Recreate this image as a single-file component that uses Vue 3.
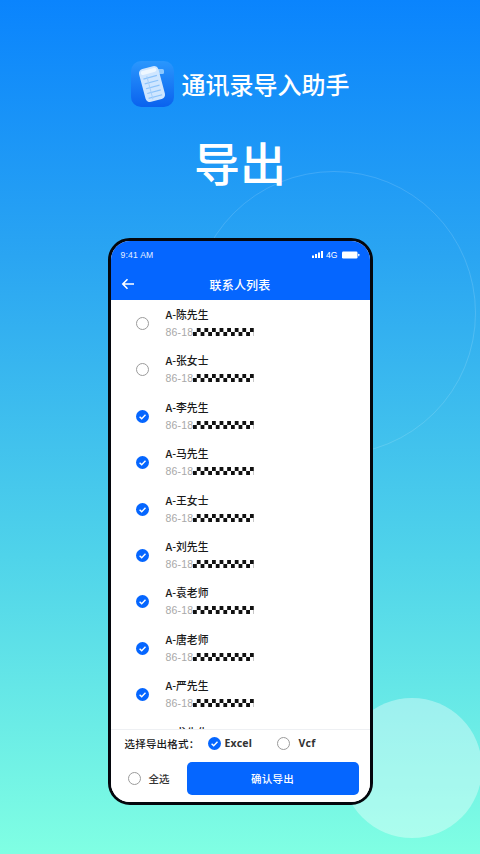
<script setup>
const contacts = [
  { name: 'A-陈先生', checked: false },
  { name: 'A-张女士', checked: false },
  { name: 'A-李先生', checked: true },
  { name: 'A-马先生', checked: true },
  { name: 'A-王女士', checked: true },
  { name: 'A-刘先生', checked: true },
  { name: 'A-袁老师', checked: true },
  { name: 'A-唐老师', checked: true },
  { name: 'A-严先生', checked: true },
  { name: 'A-戈先生', checked: true }
]
</script>

<template>
  <div class="page">
    <div class="ring"></div>
    <div class="blob"></div>

    <header class="brand">
      <div class="logo">
        <svg viewBox="0 0 43 46" width="43" height="46">
          <defs>
            <linearGradient id="logoBg" x1="0" y1="0" x2="0" y2="1">
              <stop offset="0" stop-color="#2a97fd" />
              <stop offset="1" stop-color="#0a62ee" />
            </linearGradient>
          </defs>
          <rect width="43" height="46" rx="10" fill="url(#logoBg)" />
          <rect x="26" y="8" width="7" height="5" rx="1.5" fill="#8cc8ff" />
          <g transform="rotate(-15 21 23)">
            <rect x="11" y="6" width="20" height="34" rx="4.5" fill="#cfe6ff" />
            <rect x="13" y="8" width="16" height="4" rx="2" fill="#eef7ff" />
            <path d="M14 16h14M14 21h14M14 26h14M14 31h14M14 36h14" stroke="#8cc3fb" stroke-width="1.2" />
            <path d="M18 14v24" stroke="#a5cffb" stroke-width="1" />
          </g>
        </svg>
      </div>
      <span class="app-name">通讯录导入助手</span>
    </header>

    <h1 class="headline">导出</h1>

    <div class="phone">
      <div class="topbar">
        <div class="status">
          <span class="time">9:41 AM</span>
          <div class="status-right">
            <svg width="12" height="7" viewBox="0 0 12 7">
              <rect x="0" y="4.5" width="2" height="2.5" fill="#fff" />
              <rect x="3" y="3" width="2" height="4" fill="#fff" />
              <rect x="6" y="1.5" width="2" height="5.5" fill="#fff" />
              <rect x="9" y="0" width="2" height="7" fill="#fff" />
            </svg>
            <span class="net">4G</span>
            <svg width="18" height="8" viewBox="0 0 18 8">
              <rect x="0" y="0.5" width="15.5" height="7" rx="1.2" fill="#fff" />
              <rect x="16.2" y="2.8" width="1.2" height="2.4" rx="0.5" fill="#fff" />
            </svg>
          </div>
        </div>
        <div class="navbar">
          <svg class="back" width="14" height="12" viewBox="0 0 14 12" fill="none" stroke="#fff" stroke-width="1.6">
            <path d="M13 6H2M6.5 1.2 1.8 6l4.7 4.8" />
          </svg>
          <span class="nav-title">联系人列表</span>
        </div>
      </div>

      <div class="list">
        <div v-for="c in contacts" :key="c.name" class="row">
          <span class="radio-slot">
            <svg v-if="c.checked" class="tick" viewBox="0 0 13 13" width="13" height="13">
              <circle cx="6.5" cy="6.5" r="6.5" fill="#0566ff" />
              <path d="M3.6 6.7 5.7 8.7 9.5 4.8" fill="none" stroke="#fff" stroke-width="1.4" />
            </svg>
            <span v-else class="radio"></span>
          </span>
          <div class="info">
            <div class="name">{{ c.name }}</div>
            <div class="tel">86-18<span class="mask"></span></div>
          </div>
        </div>
      </div>

      <div class="bottom">
        <div class="formats">
          <span class="fmt-label">选择导出格式：</span>
          <svg class="tick" viewBox="0 0 13 13" width="13" height="13">
            <circle cx="6.5" cy="6.5" r="6.5" fill="#0566ff" />
            <path d="M3.6 6.7 5.7 8.7 9.5 4.8" fill="none" stroke="#fff" stroke-width="1.4" />
          </svg>
          <span class="fmt excel">Excel</span>
          <span class="radio vcf-radio"></span>
          <span class="fmt vcf">Vcf</span>
        </div>
        <div class="actions">
          <span class="radio"></span>
          <span class="all">全选</span>
          <button class="confirm">确认导出</button>
        </div>
      </div>
    </div>
  </div>
</template>

<style scoped>
.page {
  position: relative;
  width: 480px;
  height: 854px;
  overflow: hidden;
  display: flex;
  flex-direction: column;
  align-items: center;
  background: linear-gradient(180deg, #0a84fd 0%, #2aa5f2 30%, #4fd3ea 65%, #80ffe3 100%);
  font-family: "Noto Sans CJK SC", "Noto Sans", sans-serif;
}

.ring {
  position: absolute;
  left: 192px;
  top: 171px;
  width: 282px;
  height: 282px;
  border: 1.5px solid rgba(255, 255, 255, 0.14);
  border-radius: 50%;
}
.blob {
  position: absolute;
  left: 342px;
  top: 698px;
  width: 140px;
  height: 140px;
  border-radius: 50%;
  background: rgba(255, 255, 255, 0.36);
}

.brand {
  position: relative;
  display: flex;
  align-items: center;
  gap: 8px;
  margin-top: 61px;
  height: 46px;
}
.logo { width: 43px; height: 46px; }
.logo svg { display: block; }
.app-name {
  color: #fff;
  font-size: 24px;
  font-weight: 500;
  line-height: 46px;
}

.headline {
  position: relative;
  margin: 20px 0 0;
  color: #fff;
  font-size: 46px;
  font-weight: 500;
  line-height: 68px;
}

.phone {
  position: relative;
  box-sizing: border-box;
  width: 265px;
  height: 567px;
  margin-top: 43px;
  border: 3px solid #04070d;
  border-radius: 22px;
  background: #fff;
  overflow: hidden;
  display: flex;
  flex-direction: column;
}

.topbar {
  flex-shrink: 0;
  height: 59px;
  background: #0566ff;
  color: #fff;
  display: flex;
  flex-direction: column;
}
.status {
  display: flex;
  justify-content: space-between;
  align-items: center;
  height: 27px;
  padding: 0 10px 0 10px;
}
.time {
  font-family: "Liberation Sans", sans-serif;
  font-size: 8.6px;
  letter-spacing: 0.2px;
  opacity: 0.9;
}
.status-right { display: flex; align-items: center; gap: 2px; }
.net { font-family: "Liberation Sans", sans-serif; font-size: 8.6px; margin-right: 2px; }

.navbar {
  position: relative;
  flex: 1;
  display: flex;
  align-items: center;
  justify-content: center;
}
.back { position: absolute; left: 10px; top: 10px; }
.nav-title { font-size: 12px; font-weight: 500; letter-spacing: 0.2px; }

.list {
  flex: 1;
  min-height: 0;
  overflow: hidden;
}
.row {
  height: 46.4px;
  display: flex;
  align-items: flex-start;
  padding-left: 25px;
}
.radio-slot {
  width: 13px;
  height: 13px;
  margin-top: 17px;
  display: flex;
  flex-shrink: 0;
}
.info { margin-left: 17px; padding-top: 6px; }
.name {
  color: #1a1a1a;
  font-size: 10.8px;
  font-weight: 500;
  line-height: 16px;
}
.tel {
  display: flex;
  align-items: center;
  margin-top: 2px;
  color: #a8a8a8;
  font-family: "Liberation Sans", sans-serif;
  font-size: 10.5px;
  line-height: 16px;
  letter-spacing: 0.2px;
}
.mask {
  width: 61px;
  height: 8px;
  background: repeating-conic-gradient(#111 0 25%, #fff 0 50%) 0 0 / 7.6px 8px;
}

.radio {
  box-sizing: border-box;
  display: block;
  width: 13px;
  height: 13px;
  flex-shrink: 0;
  border: 1.2px solid #9b9b9b;
  border-radius: 50%;
  background: #fff;
}
.tick { display: block; flex-shrink: 0; }

.bottom {
  flex-shrink: 0;
  height: 73px;
  background: #fff;
  border-top: 1px solid #eef0f3;
  box-sizing: border-box;
}
.formats {
  display: flex;
  align-items: center;
  height: 26px;
  padding-left: 14px;
}
.fmt-label {
  width: 83px;
  color: #1a1a1a;
  font-size: 10.5px;
  font-weight: 500;
  letter-spacing: 0.2px;
  white-space: nowrap;
}
.fmt {
  margin-left: 4px;
  color: #333;
  font-family: "Noto Sans", sans-serif;
  font-size: 10.5px;
  font-weight: 700;
}
.excel { width: 46px; letter-spacing: 0.2px; }
.vcf-radio { margin-left: 6px; }
.vcf { margin-left: 9px; letter-spacing: 0.4px; }
.actions {
  display: flex;
  align-items: center;
  height: 33px;
  margin-top: 6px;
  padding: 0 11px 0 17px;
}
.all {
  margin-left: 8px;
  color: #333;
  font-size: 10.5px;
  font-weight: 500;
}
.confirm {
  width: 172px;
  height: 33px;
  margin-left: auto;
  border: none;
  border-radius: 5px;
  background: #0566ff;
  color: #fff;
  font-family: inherit;
  font-size: 10.5px;
  font-weight: 500;
  letter-spacing: 0.3px;
}
</style>
